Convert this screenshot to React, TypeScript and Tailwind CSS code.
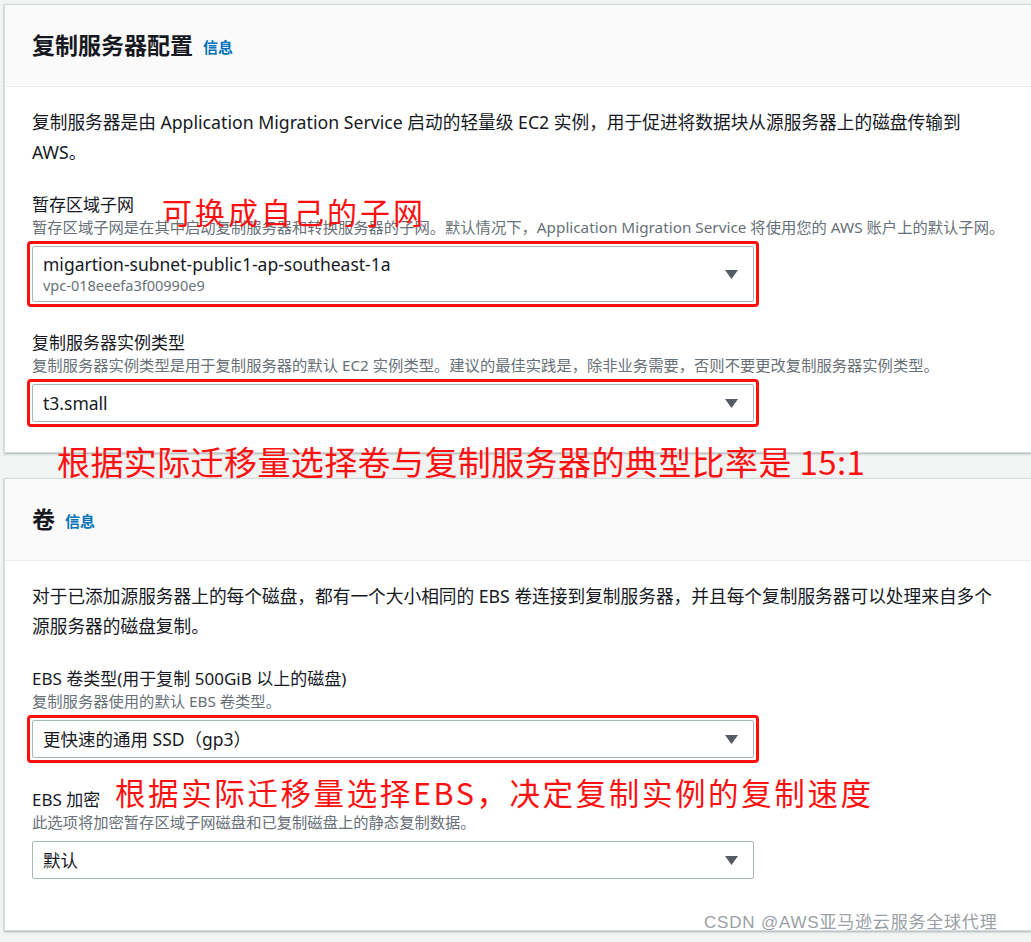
import React from "react";

const FONT = "font-['Noto_Sans','Noto_Sans_CJK_SC',sans-serif]";
const NOTE = "absolute whitespace-nowrap leading-none text-[#ff1010] font-['Noto_Sans_CJK_SC',sans-serif]";

const Arrow = () => (
  <svg width="13" height="9" viewBox="0 0 13 9" className="shrink-0">
    <path d="M0 0 H13 L6.5 9 Z" fill="#545b64" />
  </svg>
);

type SelectProps = {
  value: string;
  sub?: string;
  marked?: boolean;
};

const Select = ({ value, sub, marked }: SelectProps) => (
  <div className="relative w-[722px]">
    <div
      className={`flex items-center justify-between rounded-[2px] border border-[#aab7b8] bg-white pl-[10px] pr-[15px] ${
        sub ? "h-[56px]" : "h-[38px]"
      }`}
    >
      <div className="flex flex-col">
        <span className="text-[17.5px] leading-[22px] text-[#16191f]">{value}</span>
        {sub && <span className="text-[14.5px] leading-[20px] text-[#687078]">{sub}</span>}
      </div>
      <Arrow />
    </div>
    {marked && (
      <div className="absolute -inset-[5px] rounded-[4px] border-[3px] border-[#ff1010]" />
    )}
  </div>
);

type FieldProps = {
  label: string;
  desc: string;
  children: React.ReactNode;
};

const Field = ({ label, desc, children }: FieldProps) => (
  <div className="flex flex-col">
    <div className="text-[17px] leading-[22px] text-[#16191f]">{label}</div>
    <div className="mb-[8px] whitespace-nowrap text-[15.3px] leading-[22px] text-[#687078]">{desc}</div>
    {children}
  </div>
);

type PanelProps = {
  title: string;
  children: React.ReactNode;
  height: string;
};

const Panel = ({ title, children, height }: PanelProps) => (
  <section
    className={`flex flex-col border-y border-l border-[#d5dbdb] bg-white shadow-[0_1px_2px_rgba(0,28,36,0.3)] ${height}`}
  >
    <header className="flex h-[82px] items-center gap-[10px] border-b border-[#eaeded] bg-[#fafafa] pl-[27px]">
      <h2 className="text-[23px] font-bold text-[#16191f]">{title}</h2>
      <span className="pt-[3px] text-[15px] font-bold text-[#0073bb]">信息</span>
    </header>
    <div className="flex flex-col px-[27px]">{children}</div>
  </section>
);

export default function App() {
  return (
    <div className={`relative h-[942px] w-[1031px] overflow-hidden bg-[#f2f3f3] pl-[4px] pt-[4px] ${FONT}`}>
      <Panel title="复制服务器配置" height="h-[449px]">
        <p className="mt-[20px] text-[17.7px] leading-[30px] text-[#16191f]">
          复制服务器是由 Application Migration Service 启动的轻量级 EC2 实例，用于促进将数据块从源服务器上的磁盘传输到 AWS。
        </p>
        <div className="mt-[27px]">
          <Field
            label="暂存区域子网"
            desc="暂存区域子网是在其中启动复制服务器和转换服务器的子网。默认情况下，Application Migration Service 将使用您的 AWS 账户上的默认子网。"
          >
            <Select value="migartion-subnet-public1-ap-southeast-1a" sub="vpc-018eeefa3f00990e9" marked />
          </Field>
        </div>
        <div className="mt-[30px]">
          <Field
            label="复制服务器实例类型"
            desc="复制服务器实例类型是用于复制服务器的默认 EC2 实例类型。建议的最佳实践是，除非业务需要，否则不要更改复制服务器实例类型。"
          >
            <Select value="t3.small" marked />
          </Field>
        </div>
      </Panel>

      <div className="h-[25px]" />

      <Panel title="卷" height="h-[453px]">
        <p className="mt-[20px] text-[17.7px] leading-[30px] text-[#16191f]">
          对于已添加源服务器上的每个磁盘，都有一个大小相同的 EBS 卷连接到复制服务器，并且每个复制服务器可以处理来自多个源服务器的磁盘复制。
        </p>
        <div className="mt-[27px]">
          <Field label="EBS 卷类型(用于复制 500GiB 以上的磁盘)" desc="复制服务器使用的默认 EBS 卷类型。">
            <Select value="更快速的通用 SSD（gp3）" marked />
          </Field>
        </div>
        <div className="mt-[31px]">
          <Field label="EBS 加密" desc="此选项将加密暂存区域子网磁盘和已复制磁盘上的静态复制数据。">
            <Select value="默认" />
          </Field>
        </div>
      </Panel>

      <div className={`${NOTE} left-[162px] top-[196px] text-[30px] tracking-[3px]`}>可换成自己的子网</div>
      <div className={`${NOTE} left-[57px] top-[445px] text-[33px] tracking-[0.4px]`}>
        根据实际迁移量选择卷与复制服务器的典型比率是 15:1
      </div>
      <div className={`${NOTE} left-[115px] top-[777px] text-[30.5px] tracking-[2.6px]`}>
        根据实际迁移量选择EBS，决定复制实例的复制速度
      </div>
      <div className="absolute left-[704px] top-[910px] whitespace-nowrap font-['Liberation_Sans','Noto_Sans_CJK_SC',sans-serif] text-[17px] tracking-[0.8px] text-[#9aa0a6]">
        CSDN @AWS亚马逊云服务全球代理
      </div>
    </div>
  );
}
